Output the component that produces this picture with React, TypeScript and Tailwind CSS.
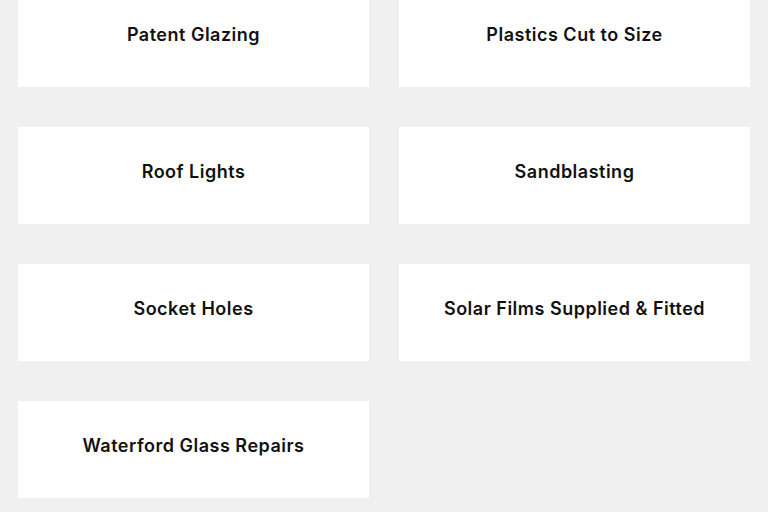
const services = [
  "Patent Glazing",
  "Plastics Cut to Size",
  "Roof Lights",
  "Sandblasting",
  "Socket Holes",
  "Solar Films Supplied & Fitted",
  "Waterford Glass Repairs",
];

export default function App() {
  return (
    <main className="h-[512px] overflow-hidden bg-[#f0f0f0] px-[18px]">
      <div className="-mt-[10px] grid grid-cols-2 gap-x-[30px] gap-y-[40px]">
        {services.map((name) => (
          <div
            key={name}
            className="flex h-[97px] items-center justify-center bg-white pb-[7px]"
          >
            <h3 className="font-['Inter',sans-serif] text-[18px] font-semibold leading-6 tracking-[0.5px] text-[#111111]">
              {name}
            </h3>
          </div>
        ))}
      </div>
    </main>
  );
}
